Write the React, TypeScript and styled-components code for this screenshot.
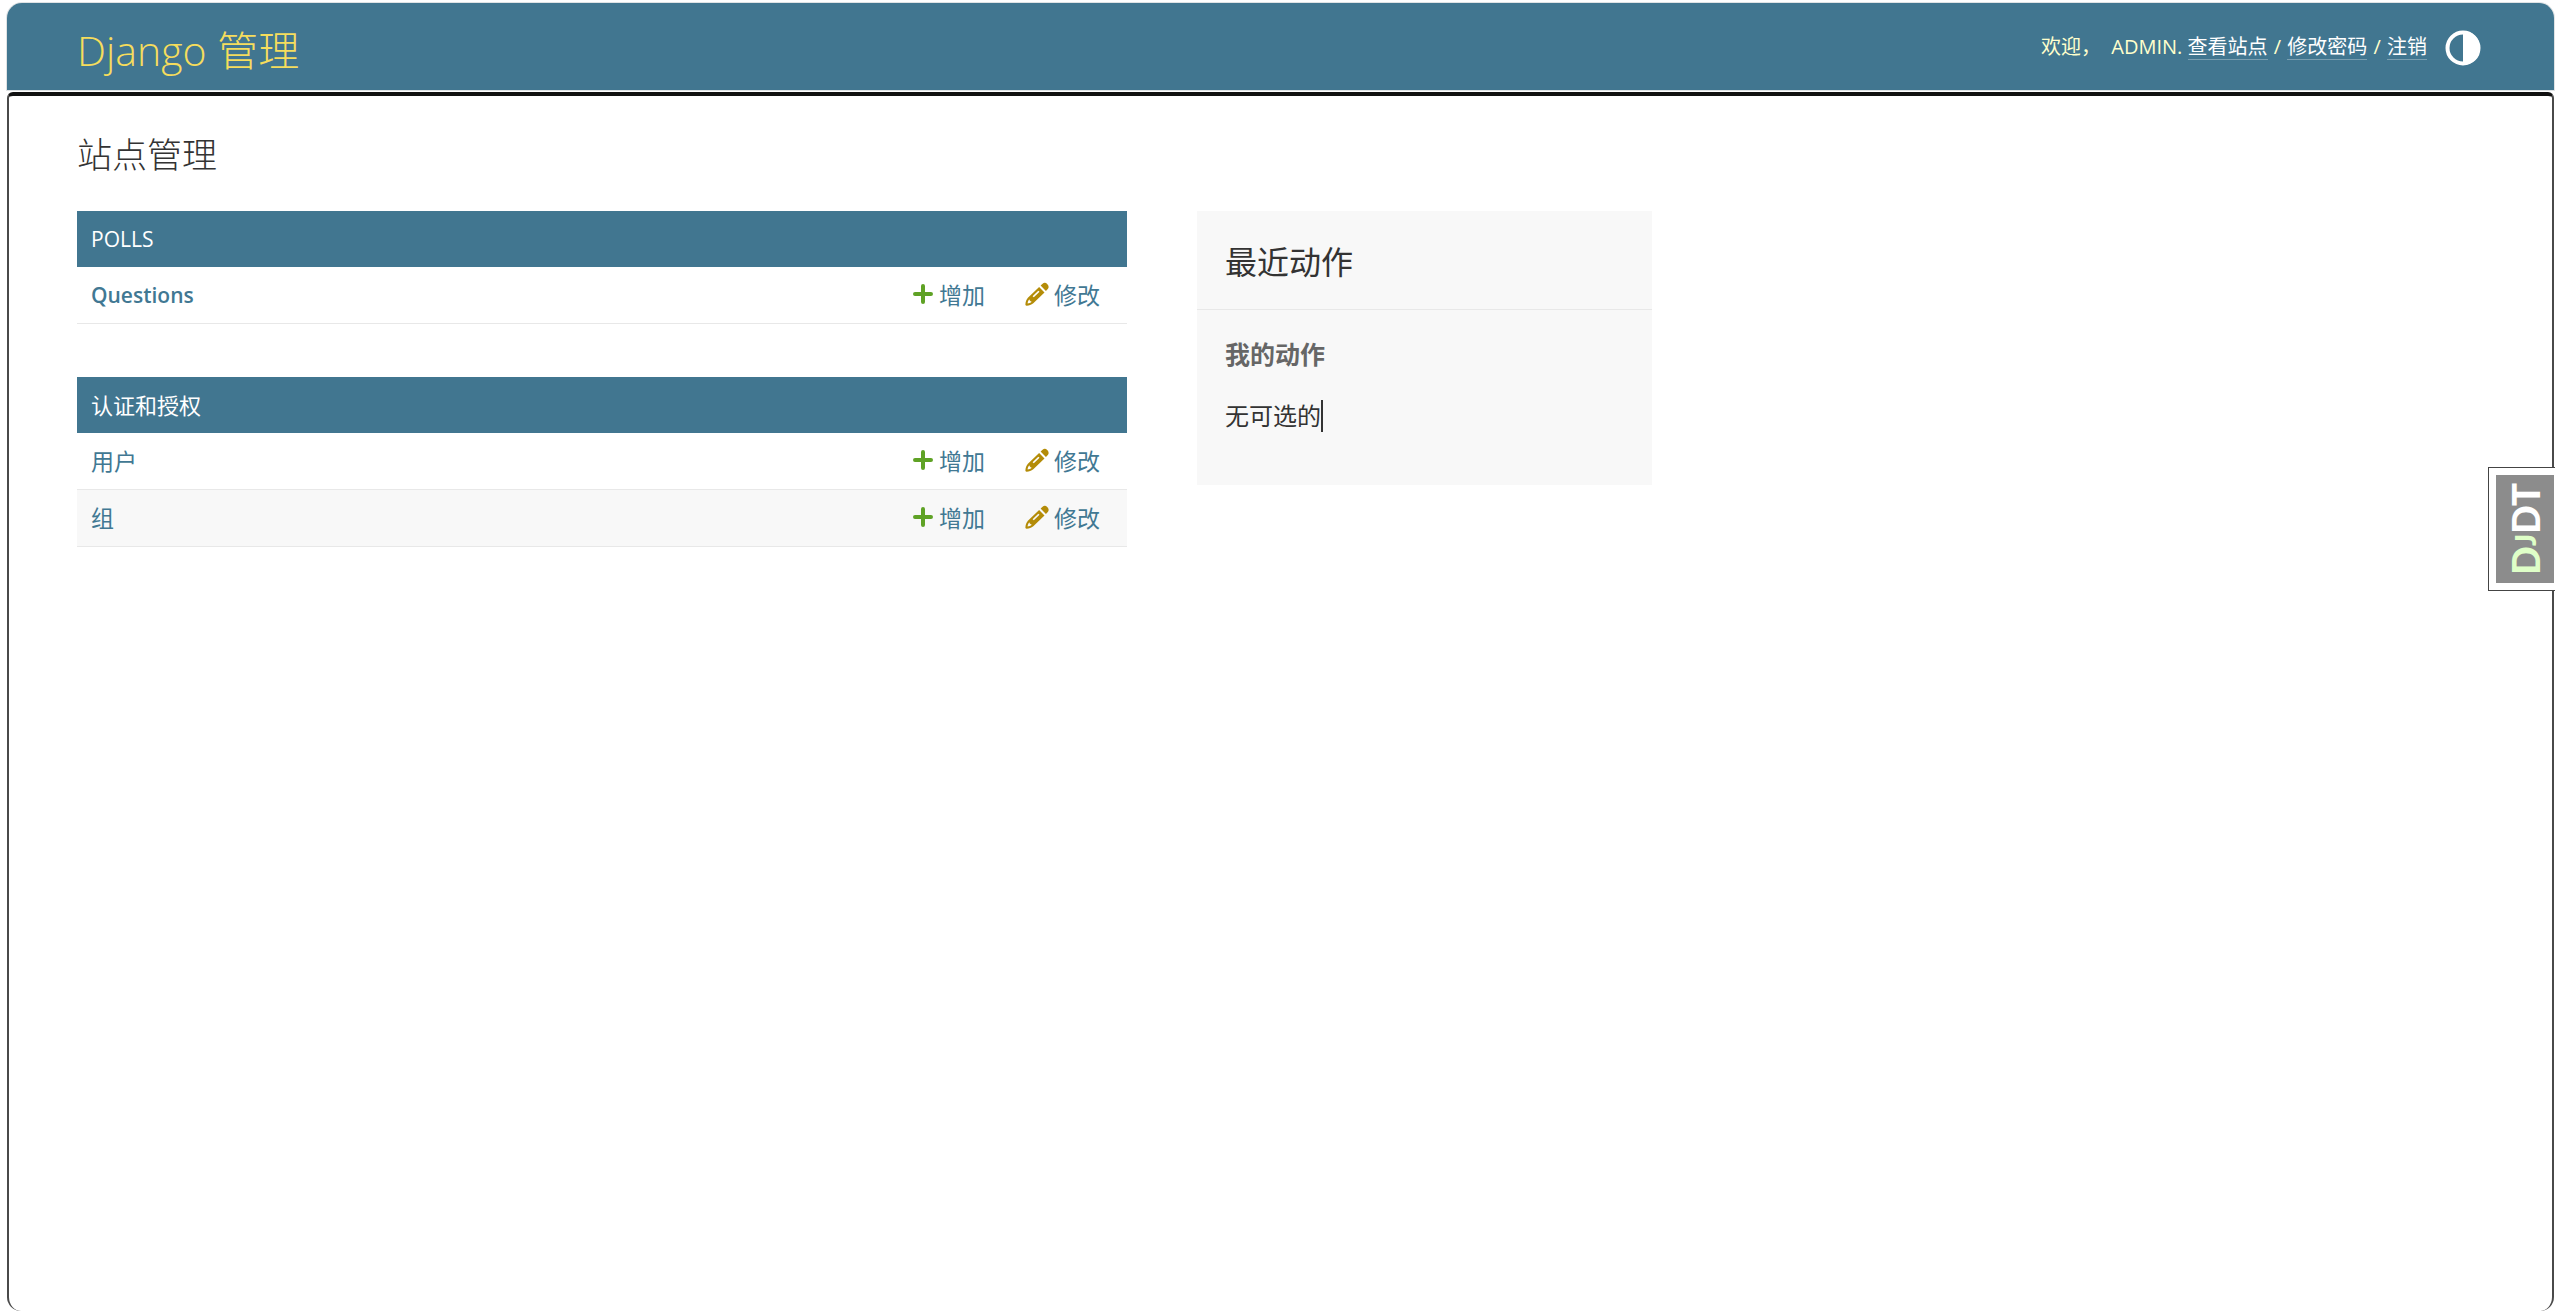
import React from "react";
import styled, { createGlobalStyle } from "styled-components";

const color = {
  primary: "#417690",
  accent: "#f5dd5d",
  link: "#417893",
  text: "#333",
  quiet: "#666",
  hairline: "#e8e8e8",
  shade: "#f8f8f8",
  frame: "#4a4a4a",
};

const GlobalStyle = createGlobalStyle`
  *, *::before, *::after { box-sizing: border-box; }
  body {
    margin: 0;
    background: #fff;
    color: ${color.text};
    font-family: "Open Sans", "Noto Sans CJK SC", sans-serif;
    font-size: 24px;
  }
  a { text-decoration: none; }
`;

const Page = styled.div`
  display: flex;
  flex-direction: column;
  min-height: 100vh;
  padding: 3px 1px 0 7px;
`;

const Header = styled.header`
  display: flex;
  align-items: center;
  justify-content: space-between;
  height: 87px;
  margin-bottom: 2px;
  padding: 0 73px 0 70px;
  border-radius: 15px 15px 0 0;
  background: ${color.primary};
  box-shadow: 0 0 0 1px #dfe3e5;
`;

const Brand = styled.h1`
  margin: 0;
  padding-top: 6px;
  font-size: 41px;
  font-weight: 300;
  line-height: 60px;

  a { color: ${color.accent}; }
`;

const Tools = styled.div`
  display: flex;
  align-items: center;
  gap: 18px;
`;

const UserTools = styled.div`
  padding-top: 2px;
  color: #ffc;
  font-size: 20px;
  line-height: 24px;
  white-space: pre;

  strong { font-weight: 500; }
`;

const ToolLink = styled.a`
  display: inline-block;
  border-bottom: 1px solid rgba(255, 255, 255, 0.3);
  color: #fff;
`;

const Separator = styled.span`
  padding: 0 1px;
`;

const ThemeButton = styled.button`
  display: flex;
  padding: 2px 0 0;
  border: 0;
  background: none;
  color: #fff;
`;

const Content = styled.main`
  flex: 1;
  padding: 33px 68px;
  border: solid ${color.frame};
  border-width: 4px 2px 0;
  border-top-color: #111;
  border-radius: 6px 6px 14px 14px;
`;

const PageTitle = styled.h2`
  margin: 0 0 30px;
  font-size: 35px;
  font-weight: 300;
  line-height: 52px;
`;

const Columns = styled.div`
  display: flex;
  align-items: flex-start;
  gap: 70px;
`;

const ModuleList = styled.div`
  display: flex;
  flex: 0 1 1050px;
  flex-direction: column;
  gap: 53px;
`;

const Module = styled.table`
  width: 100%;
  border-collapse: separate;
  border-spacing: 0;
`;

const ModuleCaption = styled.caption<{ $latin: boolean }>`
  height: 56px;
  padding: 0 14px;
  background: ${color.primary};
  color: #fff;
  font-size: ${(p) => (p.$latin ? 21 : 22)}px;
  line-height: 57px;
  text-align: left;

  a { color: inherit; }
`;

const ModelRow = styled.tr<{ $shaded: boolean }>`
  height: 57px;
  background: ${(p) => (p.$shaded ? color.shade : "#fff")};

  th, td {
    padding: 0;
    border-bottom: 1px solid ${color.hairline};
    font-size: 23px;
    line-height: 28px;
    text-align: left;
    vertical-align: middle;
  }
  a { color: ${color.link}; }
`;

const ModelName = styled.th<{ $latin: boolean }>`
  && {
    padding-left: 14px;
    font-size: ${(p) => (p.$latin ? 21 : 23)}px;
  }
  font-weight: ${(p) => (p.$latin ? 600 : 400)};
`;

const ActionCell = styled.td<{ $width: number }>`
  width: ${(p) => p.$width}px;
`;

const ActionLink = styled.a`
  display: flex;
  align-items: center;
  gap: 5px;
`;

const Sidebar = styled.aside`
  flex: 0 1 455px;
  padding-bottom: 51px;
  background: ${color.shade};
`;

const SidebarTitle = styled.h2`
  margin: 0;
  padding: 30px 28px 26px;
  border-bottom: 1px solid ${color.hairline};
  font-size: 32px;
  font-weight: 400;
  line-height: 42px;
`;

const SidebarHeading = styled.h3`
  margin: 0;
  padding: 26px 28px 0;
  color: ${color.quiet};
  font-size: 25px;
  font-weight: 700;
  line-height: 36px;
`;

const SidebarText = styled.p`
  display: flex;
  align-items: center;
  margin: 0;
  padding: 26px 28px 0;
  line-height: 36px;
`;

const Caret = styled.span`
  width: 2px;
  height: 32px;
  background: ${color.text};
`;

const DebugHandle = styled.button`
  position: fixed;
  top: 467px;
  right: 0;
  padding: 7px 1px 7px 7px;
  border: 1px solid #444;
  border-right: 0;
  background: #fff;
`;

const DebugLabel = styled.span`
  display: flex;
  align-items: center;
  justify-content: center;
  width: 58px;
  height: 108px;
  background: #8c8c8c;
  color: #fff;
  font: 900 38px/58px Lato, sans-serif;
  writing-mode: vertical-rl;
  transform: rotate(180deg);
`;

const DebugAccent = styled.span`
  color: #dfffc8;

  small { font-size: 28px; }
`;

const HalfCircleIcon = () => (
  <svg width="36" height="36" viewBox="0 0 36 36" aria-hidden="true">
    <circle cx="18" cy="18" r="15.5" fill="none" stroke="currentColor" strokeWidth="4" />
    <path d="M18 1a17 17 0 0 1 0 34z" fill="currentColor" />
  </svg>
);

const PlusIcon = () => (
  <svg width="22" height="24" viewBox="0 0 22 24" aria-hidden="true">
    <path d="M11 3v16M3 11h16" stroke="#5fa225" strokeWidth="4" strokeLinecap="round" />
  </svg>
);

const PencilIcon = () => (
  <svg width="24" height="26" viewBox="0 0 24 26" aria-hidden="true">
    <path
      fill="#b48c08"
      d="M15.6 3.6l2-1.9c1.6-1.4 3.4-.9 4.8.5s1.7 3.3.4 4.8l-1.9 1.9z"
    />
    <path
      fill="#b48c08"
      fillRule="evenodd"
      d="M14.1 5.1l5.4 5.3L8.3 21.2c-2 1.7-4.2 2.3-6.5 2.5-1 .1-1.5-.5-1.4-1.4.2-2.4.9-4.6 2.5-6.5zM4.3 17.3c-1.1 1.4-1.5 2.6-1.7 4.1 1.6-.2 2.9-.6 4.2-1.7-1.3-.2-2.2-1.1-2.5-2.4zM13.3 8.7l-5.7 5.5 1.2 1.1 5.7-5.5z"
    />
  </svg>
);

const modules = [
  { name: "POLLS", latin: true, models: ["Questions"] },
  { name: "认证和授权", latin: false, models: ["用户", "组"] },
];

export default function App() {
  return (
    <>
      <GlobalStyle />
      <Page lang="zh-Hans">
        <Header>
          <Brand>
            <a href="#home">Django 管理</a>
          </Brand>
          <Tools>
            <UserTools>
              {"欢迎，  "}
              <strong>ADMIN</strong>
              {". "}
              <ToolLink href="#site">查看站点</ToolLink>
              <Separator>{" / "}</Separator>
              <ToolLink href="#password">修改密码</ToolLink>
              <Separator>{" / "}</Separator>
              <ToolLink href="#logout">注销</ToolLink>
            </UserTools>
            <ThemeButton type="button" aria-label="切换主题">
              <HalfCircleIcon />
            </ThemeButton>
          </Tools>
        </Header>
        <Content>
          <PageTitle>站点管理</PageTitle>
          <Columns>
            <ModuleList>
              {modules.map((module) => (
                <Module key={module.name}>
                  <ModuleCaption $latin={module.latin}>
                    <a href="#app">{module.name}</a>
                  </ModuleCaption>
                  <tbody>
                    {module.models.map((model, index) => (
                      <ModelRow key={model} $shaded={index % 2 === 1}>
                        <ModelName scope="row" $latin={module.latin}>
                          <a href="#model">{model}</a>
                        </ModelName>
                        <ActionCell $width={113}>
                          <ActionLink href="#add">
                            <PlusIcon />
                            增加
                          </ActionLink>
                        </ActionCell>
                        <ActionCell $width={102}>
                          <ActionLink href="#change">
                            <PencilIcon />
                            修改
                          </ActionLink>
                        </ActionCell>
                      </ModelRow>
                    ))}
                  </tbody>
                </Module>
              ))}
            </ModuleList>
            <Sidebar>
              <SidebarTitle>最近动作</SidebarTitle>
              <SidebarHeading>我的动作</SidebarHeading>
              <SidebarText>
                无可选的
                <Caret />
              </SidebarText>
            </Sidebar>
          </Columns>
        </Content>
      </Page>
      <DebugHandle type="button" aria-label="Django Debug Toolbar">
        <DebugLabel>
          <DebugAccent>
            D<small>J</small>
          </DebugAccent>
          DT
        </DebugLabel>
      </DebugHandle>
    </>
  );
}
